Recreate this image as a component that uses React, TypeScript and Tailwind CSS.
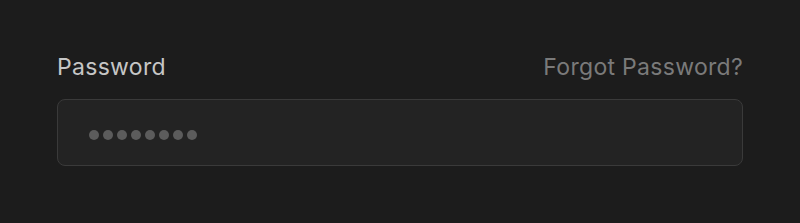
export default function App() {
  return (
    <div className="min-h-[223px] w-full bg-[#1c1c1c] px-[57px] pt-[53px] font-['Inter',sans-serif]">
      <div className="flex items-center justify-between">
        <label className="text-[23px] leading-[28px] tracking-[0.3px] text-[#c6c6c6]">Password</label>
        <a href="#" className="text-[23px] leading-[28px] tracking-[0.3px] text-[#7a7a7a]">
          Forgot Password?
        </a>
      </div>
      <div className="mt-[18px] flex h-[67px] items-center rounded-[8px] border border-[#3a3a3a] bg-[#232323] pl-[31px] pt-[4px]">
        <div className="flex gap-[4px]">
          {Array.from({ length: 8 }).map((_, i) => (
            <span key={i} className="h-[10px] w-[10px] rounded-full bg-[#5c5c5c]" />
          ))}
        </div>
      </div>
    </div>
  );
}
